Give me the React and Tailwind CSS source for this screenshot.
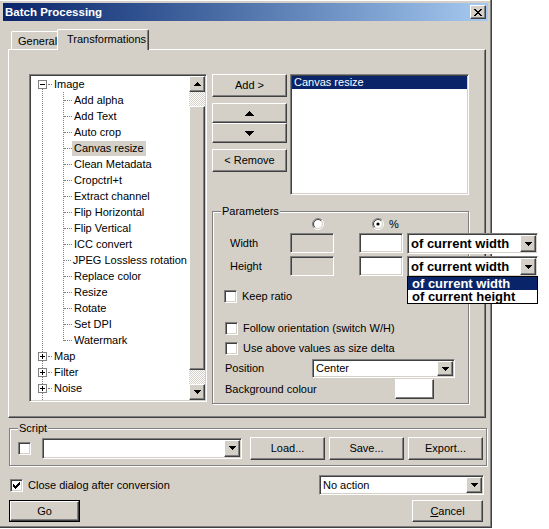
import React from 'react';

const RAISED =
  "border border-t-white border-l-white border-r-[#404040] border-b-[#404040] shadow-[inset_-1px_-1px_0_#808080] bg-[#d4d0c8]";
const SUNKEN =
  "border border-t-[#808080] border-l-[#808080] border-r-white border-b-white shadow-[inset_1px_1px_0_#404040,inset_-1px_-1px_0_#d4d0c8]";

function Tri({ dir = 'down', size = 7 }) {
  const rows = Math.ceil(size / 2);
  const rects = [];
  for (let i = 0; i < rows; i++) {
    const w = size - i * 2;
    const y = dir === 'down' ? i : rows - 1 - i;
    rects.push(<rect key={i} x={i} y={y} width={w} height={1} fill="#000" />);
  }
  return (
    <svg width={size} height={rows} viewBox={`0 0 ${size} ${rows}`} shapeRendering="crispEdges">
      {rects}
    </svg>
  );
}

function Btn({ className = '', children }) {
  return <div className={`${RAISED} flex items-center justify-center text-[11px] text-black whitespace-nowrap ${className}`}>{children}</div>;
}

function Combo({ className = '', text, bold, children }) {
  return (
    <div className={`${SUNKEN} bg-white flex items-stretch p-[1px] relative ${className}`}>
      <div className={`flex-1 flex items-center pl-[2px] whitespace-nowrap overflow-hidden ${bold ? "font-bold text-[13px]" : "text-[11px]"}`}>
        {text}
      </div>
      <div className={`${RAISED} w-[16px] flex items-center justify-center`}>
        <Tri dir="down" size={7} />
      </div>
      {children}
    </div>
  );
}

function Check({ checked }) {
  return (
    <div className={`${SUNKEN} bg-white w-[13px] h-[13px] shrink-0 flex items-center justify-center`}>
      {checked && (
        <svg width="7" height="7" viewBox="0 0 7 7" shapeRendering="crispEdges">
          <rect x="6" y="0" width="1" height="1" />
          <rect x="5" y="1" width="2" height="1" />
          <rect x="0" y="2" width="1" height="1" />
          <rect x="4" y="2" width="3" height="1" />
          <rect x="0" y="3" width="2" height="1" />
          <rect x="3" y="3" width="3" height="1" />
          <rect x="0" y="4" width="5" height="1" />
          <rect x="1" y="5" width="3" height="1" />
          <rect x="2" y="6" width="1" height="1" />
        </svg>
      )}
    </div>
  );
}

function Radio({ checked }) {
  const arc = (r, c1, c2) => {
    const a = r * 0.7071;
    return (
      <>
        <path d={`M${6 - a} ${6 + a} A${r} ${r} 0 0 1 ${6 + a} ${6 - a}`} stroke={c1} fill="none" strokeWidth="1" />
        <path d={`M${6 + a} ${6 - a} A${r} ${r} 0 0 1 ${6 - a} ${6 + a}`} stroke={c2} fill="none" strokeWidth="1" />
      </>
    );
  };
  return (
    <svg width="12" height="12" viewBox="0 0 12 12">
      <circle cx="6" cy="6" r="4.5" fill="#fff" />
      {arc(5.5, '#808080', '#ffffff')}
      {arc(4.5, '#404040', '#d4d0c8')}
      {checked && <circle cx="6" cy="6" r="1.6" fill="#000" />}
    </svg>
  );
}

function Expander({ open }) {
  return (
    <div className="w-[9px] h-[9px] border border-[#808080] bg-white relative">
      <div className="absolute left-[1px] top-[3px] w-[5px] h-[1px] bg-black" />
      {!open && <div className="absolute left-[3px] top-[1px] w-[1px] h-[5px] bg-black" />}
    </div>
  );
}

const children = [
  'Add alpha', 'Add Text', 'Auto crop', 'Canvas resize', 'Clean Metadata', 'Cropctrl+t',
  'Extract channel', 'Flip Horizontal', 'Flip Vertical', 'ICC convert', 'JPEG Lossless rotation',
  'Replace color', 'Resize', 'Rotate', 'Set DPI', 'Watermark',
];

function Tree() {
  return (
    <div className={`${SUNKEN} bg-white w-[178px] h-[328px] p-[1px] flex shrink-0`}>
      <div className="flex-1 relative overflow-hidden">
        {/* tree lines (drawing) */}
        <div className="absolute left-[11px] top-[12px] h-[340px] w-0 border-l border-dotted border-[#808080]" />
        <div className="absolute left-[32px] top-[16px] h-[249px] w-0 border-l border-dotted border-[#808080]" />
        <div className="flex flex-col whitespace-nowrap">
          <div className="h-[16px] shrink-0 flex items-center relative">
            <div className="ml-[7px] relative z-10"><Expander open /></div>
            <div className="w-[4px] h-0 border-t border-dotted border-[#808080] ml-[1px]" />
            <span className="ml-[2px] text-[11px] leading-[16px]">Image</span>
          </div>
          {children.map((c) => (
            <div key={c} className="h-[16px] shrink-0 flex items-center">
              <div className="ml-[33px] w-[8px] h-0 border-t border-dotted border-[#808080]" />
              <span className={`text-[11px] leading-[15px] px-[2px] whitespace-nowrap ${c === 'Canvas resize' ? 'bg-[#d4d0c8]' : ''}`}>{c}</span>
            </div>
          ))}
          {['Map', 'Filter', 'Noise', 'Misc'].map((c) => (
            <div key={c} className="h-[16px] shrink-0 flex items-center relative">
              <div className="ml-[7px] relative z-10"><Expander /></div>
              <div className="w-[4px] h-0 border-t border-dotted border-[#808080] ml-[1px]" />
              <span className="ml-[2px] text-[11px] leading-[16px]">{c}</span>
            </div>
          ))}
        </div>
      </div>
      <div className="w-[16px] flex flex-col">
        <Btn className="h-[16px] shrink-0"><Tri dir="up" size={7} /></Btn>
        <div className="h-[14px] bg-[image:repeating-conic-gradient(#d4d0c8_0_25%,#ffffff_0_50%)] bg-[length:2px_2px]" />
        <div className={`${RAISED} flex-1`} />
        <div className="h-[14px] bg-[image:repeating-conic-gradient(#d4d0c8_0_25%,#ffffff_0_50%)] bg-[length:2px_2px]" />
        <Btn className="h-[16px] shrink-0"><Tri dir="down" size={7} /></Btn>
      </div>
    </div>
  );
}

function Parameters() {
  return (
    <div className="mt-[16px] w-[257px] h-[193px] border border-[#808080] shadow-[inset_1px_1px_0_#fff,1px_1px_0_#fff] relative flex flex-col text-[11px]">
      <span className="absolute left-[8px] top-[-8px] px-[1px] bg-[#d4d0c8] leading-[14px]">Parameters</span>
      <div className="mt-[6px] h-[12px] flex items-center">
        <div className="ml-[99px]"><Radio /></div>
        <div className="ml-[48px]"><Radio checked /></div>
        <span className="ml-[5px]">%</span>
      </div>
      <div className="mt-[3px] h-[21px] flex items-start">
        <span className="w-[77px] pl-[17px] leading-[20px] shrink-0">Width</span>
        <div className={`${SUNKEN} bg-[#d4d0c8] w-[44px] h-[20px] shrink-0`} />
        <div className={`${SUNKEN} bg-white w-[44px] h-[20px] ml-[25px] shrink-0`} />
        <Combo className="ml-[4px] w-[131px] h-[21px] shrink-0" text="of current width" bold />
      </div>
      <div className="mt-[2px] h-[21px] flex items-start relative z-20">
        <span className="w-[77px] pl-[17px] leading-[20px] shrink-0">Height</span>
        <div className={`${SUNKEN} bg-[#d4d0c8] w-[44px] h-[20px] shrink-0`} />
        <div className={`${SUNKEN} bg-white w-[44px] h-[20px] ml-[25px] shrink-0`} />
        <Combo className="ml-[4px] w-[131px] h-[21px] shrink-0" text="of current width" bold>
          <div className="absolute left-[-1px] top-[19px] w-[131px] border border-black bg-white font-bold text-[13px] leading-[13px] z-30">
            <div className="bg-[#0a246a] text-white pl-[4px] h-[13px] whitespace-nowrap">of current width</div>
            <div className="text-black pl-[4px] h-[13px] whitespace-nowrap">of current height</div>
          </div>
        </Combo>
      </div>
      <div className="mt-[13px] h-[13px] flex items-center pl-[11px]">
        <Check />
        <span className="ml-[5px]">Keep ratio</span>
      </div>
      <div className="mt-[19px] h-[13px] flex items-center pl-[12px]">
        <Check />
        <span className="ml-[5px]">Follow orientation (switch W/H)</span>
      </div>
      <div className="mt-[7px] h-[13px] flex items-center pl-[12px]">
        <Check />
        <span className="ml-[5px]">Use above values as size delta</span>
      </div>
      <div className="mt-[4px] h-[19px] flex items-center">
        <span className="w-[99px] pl-[12px] shrink-0">Position</span>
        <Combo className="w-[143px] h-[19px]" text="Center" />
      </div>
      <div className="mt-[1px] h-[20px] flex items-center">
        <span className="w-[182px] pl-[12px] shrink-0">Background colour</span>
        <div className="w-[39px] h-[20px] bg-white border border-t-white border-l-white border-r-[#404040] border-b-[#404040] shadow-[inset_-1px_-1px_0_#808080]" />
      </div>
    </div>
  );
}

export default function App() {
  return (
    <div className="w-[549px] h-[529px] bg-white font-['Liberation_Sans',Arial,sans-serif] text-black select-none">
      <div className="w-[492px] h-[528px] bg-[#d4d0c8] border-r border-b border-[#404040] shadow-[inset_-1px_-1px_0_#808080,inset_0_1px_0_#fff] flex flex-col">
        {/* Title bar */}
        <div className="mt-[3px] mx-[3px] h-[18px] bg-gradient-to-r from-[#0a246a] to-[#a6caf0] flex items-center justify-between">
          <span className="pl-[2px] text-white font-bold text-[11.5px] leading-[18px]">Batch Processing</span>
          <div className={`${RAISED} w-[16px] h-[14px] mr-[2px] flex items-center justify-center`}>
            <svg width="8" height="7" viewBox="0 0 8 7" shapeRendering="crispEdges">
              <path d="M0 0h2v1h-2zM6 0h2v1h-2zM1 1h2v1h-2zM5 1h2v1h-2zM2 2h4v1h-4zM3 3h2v1h-2zM2 4h4v1h-4zM1 5h2v1h-2zM5 5h2v1h-2zM0 6h2v1h-2zM6 6h2v1h-2z" fill="#000" />
            </svg>
          </div>
        </div>

        {/* Tabs */}
        <div className="mt-[8px] h-[20px] flex items-start pl-[11px] text-[11px]">
          <div className="mt-[2px] w-[46px] h-[18px] border-t border-l border-white rounded-tl-[2px] flex items-center pl-[6px] leading-[16px]">
            General
          </div>
          <div className="relative z-10 w-[92px] h-[21px] bg-[#d4d0c8] border-t border-l border-white border-r border-r-[#404040] shadow-[inset_-1px_0_0_#808080] rounded-t-[2px] flex items-start pl-[9px] pt-[2px] leading-[14px]">
            Transformations
          </div>
        </div>

        {/* Tab panel */}
        <div className="ml-[8px] w-[478px] h-[369px] shrink-0 border-t border-l border-white border-r border-b border-r-[#404040] border-b-[#404040] shadow-[inset_-1px_-1px_0_#808080] pl-[20px] pt-[24px] flex items-start">
          <Tree />
          <div className="ml-[5px] flex flex-col">
            <div className="flex items-start">
              <div className="w-[75px] flex flex-col">
                <Btn className="h-[23px]">Add &gt;</Btn>
                <Btn className="mt-[6px] h-[20px]"><Tri dir="up" size={9} /></Btn>
                <Btn className="h-[20px]"><Tri dir="down" size={9} /></Btn>
                <Btn className="mt-[6px] h-[23px]">&lt; Remove</Btn>
              </div>
              <div className={`${SUNKEN} bg-white ml-[3px] w-[179px] h-[121px] p-[1px]`}>
                <div className="bg-[#0a246a] text-white text-[11px] leading-[13px] h-[13px] pl-[2px]">Canvas resize</div>
              </div>
            </div>
            <Parameters />
          </div>
        </div>

        {/* Script */}
        <div className="mt-[10px] ml-[9px] w-[478px] h-[38px] shrink-0 border border-[#808080] shadow-[inset_1px_1px_0_#fff,1px_1px_0_#fff] relative flex items-center pl-[8px] pt-[2px] text-[11px]">
          <span className="absolute left-[8px] top-[-8px] px-[1px] bg-[#d4d0c8] leading-[14px]">Script</span>
          <Check />
          <Combo className="ml-[11px] w-[200px] h-[21px]" text="" />
          <Btn className="ml-[8px] w-[75px] h-[23px]">Load...</Btn>
          <Btn className="ml-[4px] w-[75px] h-[23px]">Save...</Btn>
          <Btn className="ml-[4px] w-[75px] h-[23px]">Export...</Btn>
        </div>

        {/* Close row */}
        <div className="mt-[9px] h-[20px] flex items-center pl-[10px] pr-[7px] text-[11px]">
          <Check checked />
          <span className="ml-[5px]">Close dialog after conversion</span>
          <Combo className="ml-auto w-[165px] h-[20px]" text="No action" />
        </div>

        {/* Buttons */}
        <div className="mt-[5px] h-[22px] flex items-center pl-[9px] pr-[8px]">
          <div className="w-[71px] h-[22px] border border-black">
            <Btn className="w-full h-full">Go</Btn>
          </div>
          <Btn className="ml-auto w-[71px] h-[22px]"><span><span className="underline">C</span>ancel</span></Btn>
        </div>
      </div>
    </div>
  );
}
